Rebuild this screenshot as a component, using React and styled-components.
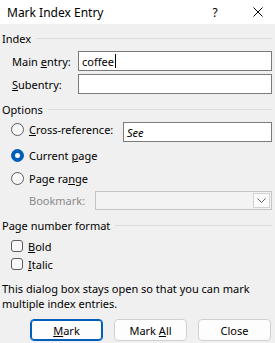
import styled, { createGlobalStyle } from "styled-components";

const GlobalStyle = createGlobalStyle`
  html, body {
    margin: 0;
    padding: 0;
    background: #f0f0f0;
  }
  body {
    font-family: "Noto Sans", "Segoe UI", sans-serif;
    font-size: 11px;
    color: #000;
  }
`;

const Dialog = styled.div`
  width: 275px;
  height: 343px;
  overflow: hidden;
  background: #f0f0f0;
`;

const TitleBar = styled.div`
  height: 24px;
  background: #fff;
  display: flex;
  align-items: center;
  padding-left: 7px;
  font-size: 12px;
`;

const Title = styled.div`
  flex: 1;
`;

const TitleButton = styled.div`
  width: 22px;
  display: flex;
  justify-content: center;
  align-items: center;
  margin-right: ${(p) => p.$gap || 0}px;
`;

const Body = styled.div`
  padding: 0 3px 0 2px;
`;

const GroupHeader = styled.div`
  display: flex;
  align-items: center;
  height: 16px;
  margin-top: ${(p) => p.$top}px;
  &::after {
    content: "";
    flex: 1;
    height: 1px;
    background: #dcdcdc;
    margin-left: 5px;
  }
`;

const FieldRow = styled.div`
  display: flex;
  align-items: center;
  margin-top: ${(p) => p.$top}px;
  padding-left: 10px;
`;

const FieldLabel = styled.label`
  width: 66px;
  color: ${(p) => (p.$disabled ? "#8a8a8a" : "#000")};
`;

const TextBox = styled.div`
  flex: 1;
  height: 20px;
  box-sizing: border-box;
  border: 1px solid #7a7a7a;
  background: #fff;
  display: flex;
  align-items: center;
  padding-left: 3px;
  font-style: ${(p) => (p.$italic ? "italic" : "normal")};
  margin-top: ${(p) => p.$top || 0}px;
`;

const Caret = styled.span`
  display: inline-block;
  width: 1px;
  height: 14px;
  background: #000;
  margin-left: 1px;
`;

const OptionRow = styled.div`
  display: flex;
  align-items: flex-start;
  margin-top: ${(p) => p.$top}px;
  padding-left: 9px;
`;

const Choice = styled.label`
  display: flex;
  align-items: center;
  height: 16px;
  gap: 5px;
  width: ${(p) => (p.$width ? `${p.$width}px` : "auto")};
`;

const Radio = styled.span`
  width: 13px;
  height: 13px;
  box-sizing: border-box;
  border-radius: 50%;
  border: 1px solid ${(p) => (p.$checked ? "#005fb8" : "#5c5c5c")};
  background: ${(p) => (p.$checked ? "#005fb8" : "#f8f8f8")};
  display: flex;
  align-items: center;
  justify-content: center;
  &::after {
    content: "";
    width: 5px;
    height: 5px;
    border-radius: 50%;
    background: #fff;
    display: ${(p) => (p.$checked ? "block" : "none")};
  }
`;

const Checkbox = styled.span`
  width: 12px;
  height: 12px;
  box-sizing: border-box;
  border: 1px solid #5c5c5c;
  border-radius: 3px;
  background: #f8f8f8;
`;

const BookmarkRow = styled.div`
  display: flex;
  align-items: center;
  margin-top: 5px;
  padding-left: 27px;
`;

const Select = styled.div`
  flex: 1;
  height: 19px;
  box-sizing: border-box;
  border: 1px solid #c4c4c4;
  background: #f3f3f3;
  display: flex;
  justify-content: flex-end;
  padding: 1px;
`;

const SelectButton = styled.div`
  width: 17px;
  box-sizing: border-box;
  border: 1px solid #d2d2d2;
  background: #fbfbfb;
  display: flex;
  align-items: center;
  justify-content: center;
`;

const Note = styled.p`
  margin: 9px 0 0;
  line-height: 15px;
`;

const Buttons = styled.div`
  display: flex;
  justify-content: flex-end;
  gap: 11px;
  margin-top: 8px;
  padding-right: 1px;
`;

const Button = styled.button`
  width: 73px;
  height: 22px;
  box-sizing: border-box;
  border: 1px solid ${(p) => (p.$default ? "#005fb8" : "#d0d0d0")};
  box-shadow: ${(p) => (p.$default ? "inset 0 0 0 1px #005fb8" : "none")};
  border-radius: 4px;
  background: #fdfdfd;
  font: inherit;
  color: #000;
  padding: 0;
`;

export default function App() {
  return (
    <Dialog>
      <GlobalStyle />
      <TitleBar>
        <Title>Mark Index Entry</Title>
        <TitleButton $gap={21}>?</TitleButton>
        <TitleButton $gap={6}>
          <svg width="10" height="10" viewBox="0 0 10 10">
            <path d="M0.5 0.5 L9.5 9.5 M9.5 0.5 L0.5 9.5" stroke="#000" strokeWidth="1" />
          </svg>
        </TitleButton>
      </TitleBar>
      <Body>
        <GroupHeader $top={6}>Index</GroupHeader>
        <FieldRow $top={5}>
          <FieldLabel>
            Main <u>e</u>ntry:
          </FieldLabel>
          <TextBox>
            coffee
            <Caret />
          </TextBox>
        </FieldRow>
        <FieldRow $top={3}>
          <FieldLabel>
            <u>S</u>ubentry:
          </FieldLabel>
          <TextBox />
        </FieldRow>
        <GroupHeader $top={7}>Options</GroupHeader>
        <OptionRow $top={4}>
          <Choice $width={112}>
            <Radio />
            <span>
              <u>C</u>ross-reference:
            </span>
          </Choice>
          <TextBox $italic $top={1}>See</TextBox>
        </OptionRow>
        <OptionRow $top={5}>
          <Choice>
            <Radio $checked />
            <span>
              Current <u>p</u>age
            </span>
          </Choice>
        </OptionRow>
        <OptionRow $top={7}>
          <Choice>
            <Radio />
            <span>
              Page ra<u>n</u>ge
            </span>
          </Choice>
        </OptionRow>
        <BookmarkRow>
          <FieldLabel $disabled>Bookmark:</FieldLabel>
          <Select>
            <SelectButton>
              <svg width="9" height="5" viewBox="0 0 9 5">
                <path d="M0.5 0.5 L4.5 4.5 L8.5 0.5" fill="none" stroke="#606060" strokeWidth="1" />
              </svg>
            </SelectButton>
          </Select>
        </BookmarkRow>
        <GroupHeader $top={7}>Page number format</GroupHeader>
        <OptionRow $top={5}>
          <Choice>
            <Checkbox />
            <span>
              <u>B</u>old
            </span>
          </Choice>
        </OptionRow>
        <OptionRow $top={2}>
          <Choice>
            <Checkbox />
            <span>
              <u>I</u>talic
            </span>
          </Choice>
        </OptionRow>
        <Note>
          This dialog box stays open so that you can mark multiple index
          entries.
        </Note>
        <Buttons>
          <Button $default>
            <u>M</u>ark
          </Button>
          <Button>
            Mark <u>A</u>ll
          </Button>
          <Button>Close</Button>
        </Buttons>
      </Body>
    </Dialog>
  );
}
